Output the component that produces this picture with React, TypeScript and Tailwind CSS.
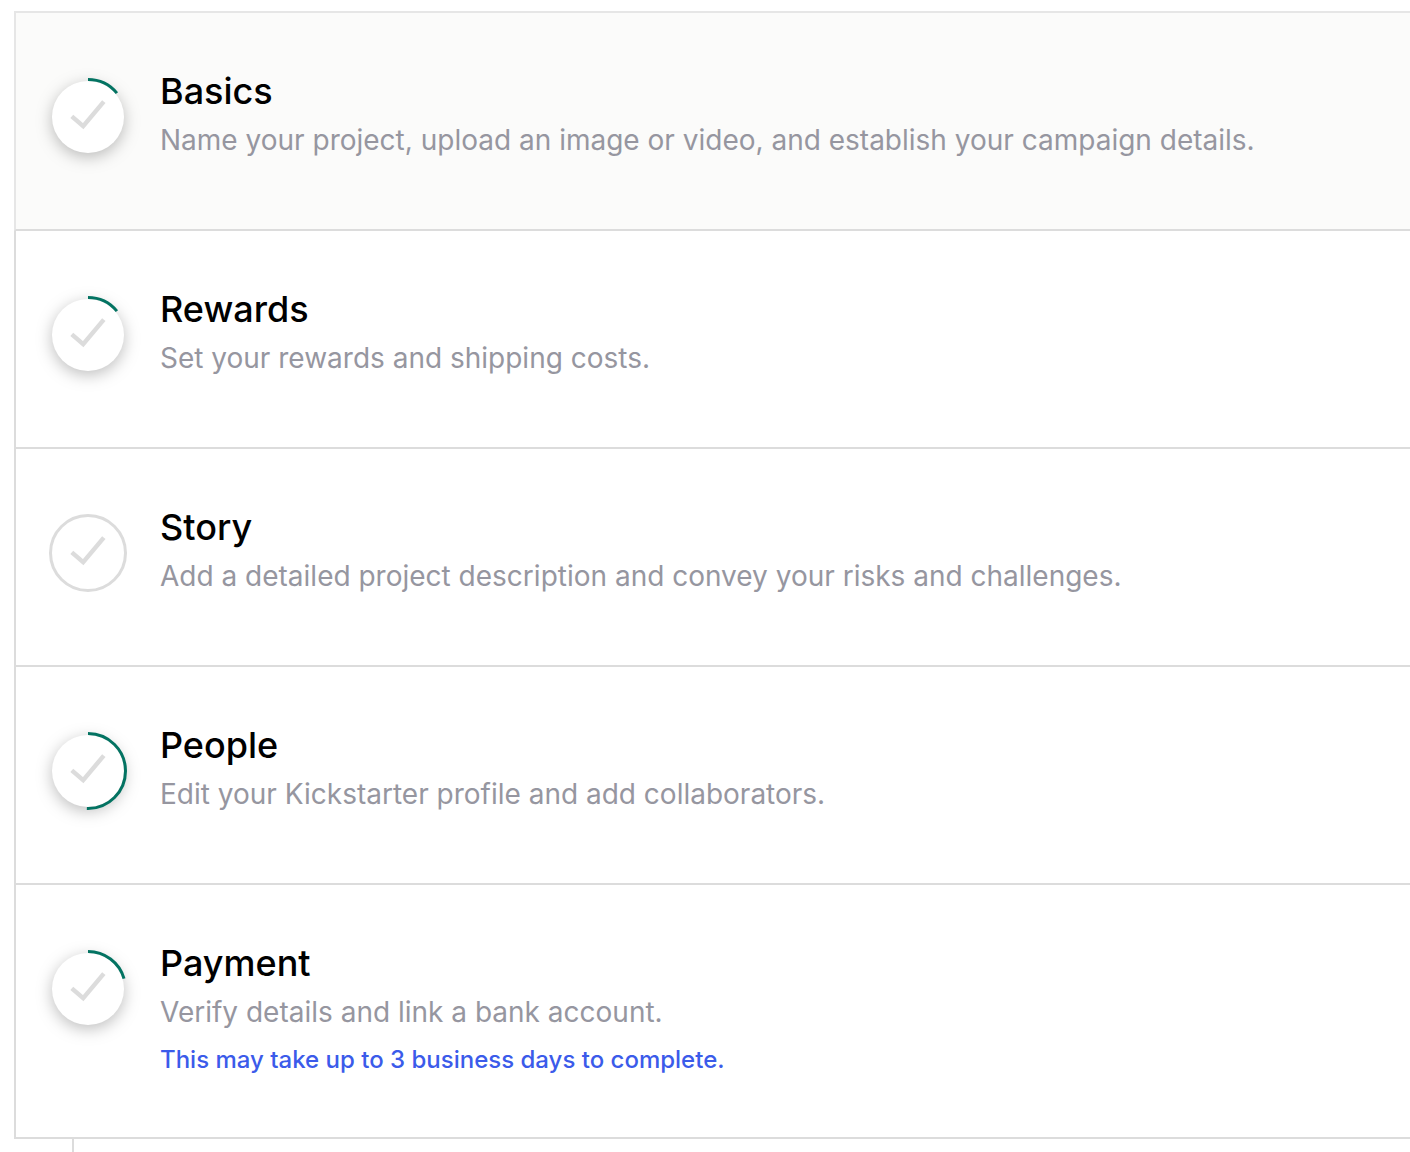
import React from "react";

type Step = { title: string; text: string; progress: number; note?: string };

const steps: Step[] = [
  { title: "Basics", text: "Name your project, upload an image or video, and establish your campaign details.", progress: 14 },
  { title: "Rewards", text: "Set your rewards and shipping costs.", progress: 14 },
  { title: "Story", text: "Add a detailed project description and convey your risks and challenges.", progress: 0 },
  { title: "People", text: "Edit your Kickstarter profile and add collaborators.", progress: 50.5 },
  { title: "Payment", text: "Verify details and link a bank account.", progress: 20.5, note: "This may take up to 3 business days to complete." },
];

function ProgressBadge({ value }: { value: number }) {
  const started = value > 0;
  return (
    <svg viewBox="0 0 78 78" className="size-[78px] shrink-0 overflow-visible" fill="none" aria-hidden="true">
      {started ? (
        <>
          <circle cx="39" cy="39" r="36" fill="#fff" className="drop-shadow-[0_4px_8px_rgba(0,0,0,0.26)]" />
          <circle cx="39" cy="39" r="37.5" stroke="#037362" strokeWidth="3" pathLength="100" strokeDasharray={`${value} 100`} transform="rotate(-90 39 39)" />
        </>
      ) : (
        <circle cx="39" cy="39" r="37.5" stroke="#dcdcdc" strokeWidth="3" />
      )}
      <path d="M22.8 38.3 L34.2 48.1 L54.8 23.6" stroke="#dcdcdc" strokeWidth="4.4" />
    </svg>
  );
}

export default function App() {
  return (
    <main className="overflow-hidden bg-white pt-[11px] pl-[14px] font-['Inter',sans-serif]">
      <ul>
        {steps.map((step) => (
          <li key={step.title} className="border-b-2 border-l-2 border-[#dcdcdc] first:border-t-2 first:border-t-[#e6e6e6] first:border-l-[#e6e6e6] first:bg-[#fbfbfa]">
            <a href={`#${step.title.toLowerCase()}`} className="flex items-start gap-[33px] pt-[60px] pr-8 pb-[58px] pl-[33px]">
              <span className="pt-[5px]"><ProgressBadge value={step.progress} /></span>
              <span className="flex flex-col">
                <span className="text-[36px] leading-[36px] font-medium text-black">{step.title}</span>
                <span className="text-[28px] leading-[62px] text-[#9696a0]">{step.text}</span>
                {step.note && <span className="pb-0.5 text-[24px] leading-[34px] font-medium text-[#3b5bea]">{step.note}</span>}
              </span>
            </a>
          </li>
        ))}
      </ul>
      <div className="ml-[58px] h-[13px] border-l-2 border-[#dcdcdc]" />
    </main>
  );
}
